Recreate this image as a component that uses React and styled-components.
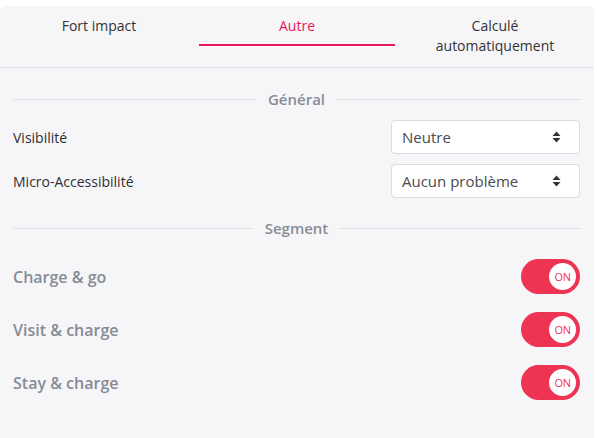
import styled, { createGlobalStyle } from "styled-components";

const GlobalStyle = createGlobalStyle`
  html, body {
    margin: 0;
    padding: 0;
    background: #ffffff;
  }
  body {
    font-family: "Open Sans", "Noto Sans", sans-serif;
  }
  * { box-sizing: border-box; }
`;

const Panel = styled.div`
  margin-top: 6px;
  width: 594px;
  height: 432px;
  background: #f6f6f9;
  border-radius: 6px 6px 0 0;
`;

const TabBar = styled.div`
  display: grid;
  grid-template-columns: repeat(3, 1fr);
  align-items: start;
  padding: 10px 0 1px;
  border-bottom: 1px solid #e1e1e6;
`;

const Tab = styled.div`
  margin: 0 1px;
  padding-bottom: 8px;
  text-align: center;
  font-size: 14px;
  line-height: 20px;
  color: ${p => (p.$active ? "#e8185a" : "#333333")};
  border-bottom: 2px solid ${p => (p.$active ? "#e8185a" : "transparent")};
`;

const Content = styled.div`
  padding: 21px 14px 0 13px;
`;

const SectionTitle = styled.div`
  display: flex;
  align-items: center;
  gap: 12px;
  font-size: 15px;
  line-height: 20px;
  font-weight: 600;
  color: #878d95;
  margin-top: ${p => p.$before || 0}px;
  margin-bottom: ${p => p.$after}px;

  &::before, &::after {
    content: "";
    flex: 1;
    height: 1px;
    background: #dedee3;
  }
`;

const FieldRow = styled.div`
  display: flex;
  align-items: center;
  justify-content: space-between;
  margin-bottom: 10px;
`;

const FieldLabel = styled.span`
  font-size: 14px;
  font-weight: 500;
  color: #2f2f33;
`;

const Select = styled.div`
  width: 189px;
  height: 34px;
  display: flex;
  align-items: center;
  justify-content: space-between;
  padding: 0 18px 0 10px;
  background: #ffffff;
  border: 1px solid #dcdce2;
  border-radius: 4px;
  font-size: 15px;
  color: #4a4a4f;
`;

const ToggleRow = styled.div`
  display: flex;
  align-items: center;
  justify-content: space-between;
  margin-bottom: 18px;
`;

const ToggleLabel = styled.span`
  font-size: 16px;
  font-weight: 600;
  color: #868c95;
`;

const Switch = styled.div`
  width: 59px;
  height: 35px;
  border-radius: 18px;
  background: #ee3453;
  display: flex;
  align-items: center;
  justify-content: flex-end;
  padding-right: 4px;
`;

const Knob = styled.div`
  width: 27px;
  height: 27px;
  border-radius: 50%;
  background: #ffffff;
  display: flex;
  align-items: center;
  justify-content: center;
  font-size: 11px;
  color: #ee3453;
  letter-spacing: -0.3px;
`;

const SortIcon = () => (
  <svg width="9" height="12" viewBox="0 0 9 12">
    <path d="M4.5 0.5 L8.5 5 L0.5 5 Z" fill="#333" />
    <path d="M4.5 11.5 L8.5 7 L0.5 7 Z" fill="#333" />
  </svg>
);

const fields = [
  { label: "Visibilité", value: "Neutre" },
  { label: "Micro-Accessibilité", value: "Aucun problème" },
];

const segments = ["Charge & go", "Visit & charge", "Stay & charge"];

export default function App() {
  return (
    <>
      <GlobalStyle />
      <Panel>
        <TabBar>
          <Tab>Fort impact</Tab>
          <Tab $active>Autre</Tab>
          <Tab>Calculé<br />automatiquement</Tab>
        </TabBar>
        <Content>
          <SectionTitle $after={11}>Général</SectionTitle>
          {fields.map(f => (
            <FieldRow key={f.label}>
              <FieldLabel>{f.label}</FieldLabel>
              <Select>
                <span>{f.value}</span>
                <SortIcon />
              </Select>
            </FieldRow>
          ))}
          <SectionTitle $before={20} $after={21}>Segment</SectionTitle>
          {segments.map(s => (
            <ToggleRow key={s}>
              <ToggleLabel>{s}</ToggleLabel>
              <Switch>
                <Knob>ON</Knob>
              </Switch>
            </ToggleRow>
          ))}
        </Content>
      </Panel>
    </>
  );
}
